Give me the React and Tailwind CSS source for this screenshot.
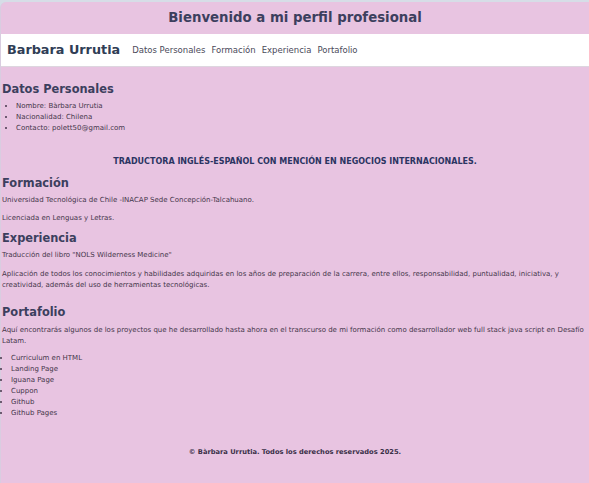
export default function App() {
  const datos = ["Nombre: Bàrbara Urrutia", "Nacionalidad: Chilena", "Contacto: polett50@gmail.com"];
  const proyectos = ["Curriculum en HTML", "Landing Page", "Iguana Page", "Cuppon", "Github", "Github Pages"];

  return (
    <div className="min-h-[483px] bg-[#d6dde7] font-['DejaVu_Sans',sans-serif]">
      <div className="min-h-[481px] translate-y-[2px] rounded-tl-md border-l border-[#d9cde0] bg-[#e8c4e1] text-[#45364a]">
        <header className="flex h-[32px] items-center justify-center">
          <h1 className="text-[13.3px] font-bold text-[#3c3f5e]">Bienvenido a mi perfil profesional</h1>
        </header>

        <nav className="flex h-[33px] items-center gap-3 border-b border-[#ddd6df] bg-white px-[6px]">
          <span className="text-[12.8px] font-semibold text-[#2f3d55]">Barbara Urrutia</span>
          <div className="flex gap-[6px] text-[8.5px] text-[#4a4a5a]">
            <a>Datos Personales</a>
            <a>Formación</a>
            <a>Experiencia</a>
            <a>Portafolio</a>
          </div>
        </nav>

        <main className="px-[1px] text-[7px]">
          <h2 className="mt-[14px] text-[11.4px] leading-[17px] font-bold text-[#3c3f5e]">Datos Personales</h2>
          <ul className="mt-[3px] list-disc pl-[14px] leading-[11px]">
            {datos.map((d) => (
              <li key={d}>{d}</li>
            ))}
          </ul>

          <p className="mt-[22px] text-center text-[8px] font-bold text-[#2b3462]">
            TRADUCTORA INGLÉS-ESPAÑOL CON MENCIÓN EN NEGOCIOS INTERNACIONALES.
          </p>

          <h2 className="mt-[7px] text-[11.4px] leading-[17px] font-bold text-[#3c3f5e]">Formación</h2>
          <p className="mt-[3px]">Universidad Tecnológica de Chile -INACAP Sede Concepción-Talcahuano.</p>
          <p className="mt-[7px]">Licenciada en Lenguas y Letras.</p>

          <h2 className="mt-[7px] text-[11.4px] leading-[17px] font-bold text-[#3c3f5e]">Experiencia</h2>
          <p className="mt-[3px]">Traducción del libro "NOLS Wilderness Medicine"</p>
          <p className="mt-[8px] leading-[11px]">
            Aplicación de todos los conocimientos y habilidades adquiridas en los años de preparación de la carrera, entre ellos, responsabilidad, puntualidad, iniciativa, y creatividad, además del uso de herramientas tecnológicas.
          </p>

          <h2 className="mt-[13px] text-[11.4px] leading-[17px] font-bold text-[#3c3f5e]">Portafolio</h2>
          <p className="mt-[4px] leading-[11px]">
            Aquí encontrarás algunos de los proyectos que he desarrollado hasta ahora en el transcurso de mi formación como desarrollador web full stack java script en Desafío Latam.
          </p>
          <ul className="mt-[6px] list-disc pl-[9px] leading-[11px]">
            {proyectos.map((p) => (
              <li key={p}>{p}</li>
            ))}
          </ul>
        </main>

        <footer className="mt-[28px] text-center text-[6.7px] font-bold text-[#3a3048]">
          © Bàrbara Urrutia. Todos los derechos reservados 2025.
        </footer>
      </div>
    </div>
  );
}
